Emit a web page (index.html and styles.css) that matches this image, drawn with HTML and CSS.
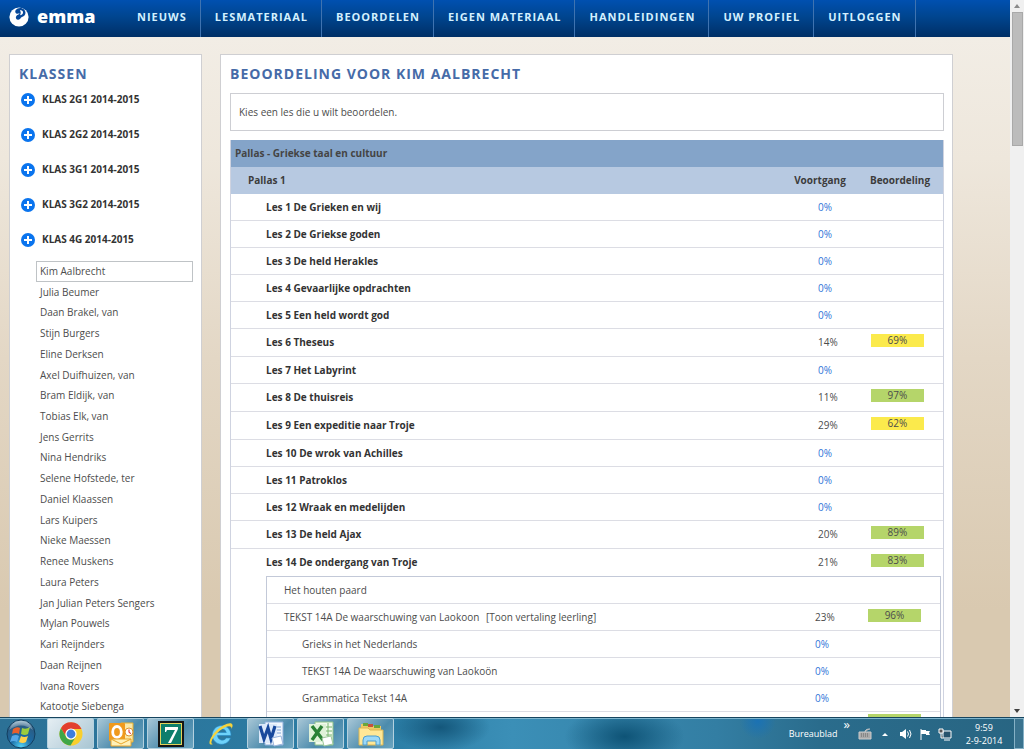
FILE: index.html
```html
<!DOCTYPE html>
<html lang="nl">
<head>
<meta charset="utf-8">
<title>emma - Beoordelen</title>
<link rel="stylesheet" href="styles.css">
</head>
<body>
<div class="window">
<div class="page">
  <header class="topbar">
    <a class="logo" href="#" aria-label="emma">
      <svg class="logo-mark" viewBox="0 0 20 20" aria-hidden="true"><circle cx="10" cy="10" r="9.6" fill="#fff"/><path d="M6.800 3C8.500 .6 13 .2 15.300 2.800C17.800 6 16 9.200 13 10C11.500 10.300 11.500 12.600 9.300 12.800C7.200 12.900 6.300 11 7.200 9.300C8 7.800 10 7.800 10.600 6.300C9.500 6.300 8.500 7.200 7.300 6.500C6 5.600 6 4 6.800 3Z" fill="#06489a"/><path d="M10.800 3.600C12.500 2.800 14.400 4 14 6C13.600 7.600 12 8 11 8.300C11.900 6.800 12.200 5 10.800 3.600Z" fill="#fff"/></svg>
      <span class="logo-name">emma</span>
    </a>
    <nav class="nav">
      <a href="#">NIEUWS</a>
      <a href="#">LESMATERIAAL</a>
      <a href="#">BEOORDELEN</a>
      <a href="#">EIGEN MATERIAAL</a>
      <a href="#">HANDLEIDINGEN</a>
      <a href="#">UW PROFIEL</a>
      <a href="#">UITLOGGEN</a>
    </nav>
  </header>
  <div class="columns">
    <aside class="panel sidebar">
      <h2 class="title">KLASSEN</h2>
      <div class="classes">
        <button class="class-toggle"><svg class="plus" viewBox="0 0 14 14"><circle cx="7" cy="7" r="7"/><path d="M7 3v8M3 7h8"/></svg>KLAS 2G1 2014-2015</button>
        <button class="class-toggle"><svg class="plus" viewBox="0 0 14 14"><circle cx="7" cy="7" r="7"/><path d="M7 3v8M3 7h8"/></svg>KLAS 2G2 2014-2015</button>
        <button class="class-toggle"><svg class="plus" viewBox="0 0 14 14"><circle cx="7" cy="7" r="7"/><path d="M7 3v8M3 7h8"/></svg>KLAS 3G1 2014-2015</button>
        <button class="class-toggle"><svg class="plus" viewBox="0 0 14 14"><circle cx="7" cy="7" r="7"/><path d="M7 3v8M3 7h8"/></svg>KLAS 3G2 2014-2015</button>
        <button class="class-toggle"><svg class="plus" viewBox="0 0 14 14"><circle cx="7" cy="7" r="7"/><path d="M7 3v8M3 7h8"/></svg>KLAS 4G 2014-2015</button>
      </div>
      <div class="students">
        <a class="student selected" href="#">Kim Aalbrecht</a>
        <a class="student" href="#">Julia Beumer</a>
        <a class="student" href="#">Daan Brakel, van</a>
        <a class="student" href="#">Stijn Burgers</a>
        <a class="student" href="#">Eline Derksen</a>
        <a class="student" href="#">Axel Duifhuizen, van</a>
        <a class="student" href="#">Bram Eldijk, van</a>
        <a class="student" href="#">Tobias Elk, van</a>
        <a class="student" href="#">Jens Gerrits</a>
        <a class="student" href="#">Nina Hendriks</a>
        <a class="student" href="#">Selene Hofstede, ter</a>
        <a class="student" href="#">Daniel Klaassen</a>
        <a class="student" href="#">Lars Kuipers</a>
        <a class="student" href="#">Nieke Maessen</a>
        <a class="student" href="#">Renee Muskens</a>
        <a class="student" href="#">Laura Peters</a>
        <a class="student" href="#">Jan Julian Peters Sengers</a>
        <a class="student" href="#">Mylan Pouwels</a>
        <a class="student" href="#">Kari Reijnders</a>
        <a class="student" href="#">Daan Reijnen</a>
        <a class="student" href="#">Ivana Rovers</a>
        <a class="student" href="#">Katootje Siebenga</a>
      </div>
    </aside>
    <main class="panel content">
      <h1 class="title">BEOORDELING VOOR KIM AALBRECHT</h1>
      <p class="notice">Kies een les die u wilt beoordelen.</p>
      <table class="lessons">
        <colgroup><col><col class="col-progress"><col class="col-grade"></colgroup>
        <thead>
          <tr class="method"><th colspan="3">Pallas - Griekse taal en cultuur</th></tr>
          <tr class="book"><th>Pallas 1</th><th class="head">Voortgang</th><th class="head">Beoordeling</th></tr>
        </thead>
        <tbody>
          <tr><th>Les 1 De Grieken en wij</th><td class="zero">0%</td><td></td></tr>
          <tr><th>Les 2 De Griekse goden</th><td class="zero">0%</td><td></td></tr>
          <tr><th>Les 3 De held Herakles</th><td class="zero">0%</td><td></td></tr>
          <tr><th>Les 4 Gevaarlijke opdrachten</th><td class="zero">0%</td><td></td></tr>
          <tr><th>Les 5 Een held wordt god</th><td class="zero">0%</td><td></td></tr>
          <tr class="graded"><th>Les 6 Theseus</th><td>14%</td><td class="grade"><span class="badge fair">69%</span></td></tr>
          <tr><th>Les 7 Het Labyrint</th><td class="zero">0%</td><td></td></tr>
          <tr class="graded"><th>Les 8 De thuisreis</th><td>11%</td><td class="grade"><span class="badge good">97%</span></td></tr>
          <tr class="graded"><th>Les 9 Een expeditie naar Troje</th><td>29%</td><td class="grade"><span class="badge fair">62%</span></td></tr>
          <tr><th>Les 10 De wrok van Achilles</th><td class="zero">0%</td><td></td></tr>
          <tr><th>Les 11 Patroklos</th><td class="zero">0%</td><td></td></tr>
          <tr><th>Les 12 Wraak en medelijden</th><td class="zero">0%</td><td></td></tr>
          <tr class="graded"><th>Les 13 De held Ajax</th><td>20%</td><td class="grade"><span class="badge good">89%</span></td></tr>
          <tr class="open"><th>Les 14 De ondergang van Troje</th><td>21%</td><td class="grade"><span class="badge good">83%</span></td></tr>
          <tr class="details"><td colspan="3">
            <table class="parts">
              <colgroup><col><col class="col-progress"><col class="col-grade"></colgroup>
              <tbody>
                <tr><th>Het houten paard</th><td></td><td></td></tr>
                <tr><th>TEKST 14A De waarschuwing van Laokoon <a class="translation" href="#">[Toon vertaling leerling]</a></th><td>23%</td><td class="grade"><span class="badge good">96%</span></td></tr>
                <tr class="sub"><th>Grieks in het Nederlands</th><td class="zero">0%</td><td></td></tr>
                <tr class="sub"><th>TEKST 14A De waarschuwing van Laokoön</th><td class="zero">0%</td><td></td></tr>
                <tr class="sub"><th>Grammatica Tekst 14A</th><td class="zero">0%</td><td></td></tr>
                <tr class="next"><th></th><td></td><td class="grade"><span class="badge good"></span></td></tr>
              </tbody>
            </table>
          </td></tr>
        </tbody>
      </table>
    </main>
  </div>
</div>
<div class="scrollbar">
  <svg class="arrow" viewBox="0 0 14 12"><path d="M4 8l3-4 3 4z" fill="#8a8a8a"/></svg>
  <div class="thumb"></div>
  <svg class="arrow" viewBox="0 0 14 12"><path d="M4 4h6L7 8z" fill="#404040"/></svg>
</div>
</div>
<footer class="taskbar">
  <button class="start" aria-label="Start"><svg viewBox="0 0 32 30">
    <defs><radialGradient id="orb" cx=".5" cy=".95" r=".95"><stop offset="0" stop-color="#52d2f5"/><stop offset=".4" stop-color="#1b6aa3"/><stop offset=".8" stop-color="#2b5c83"/><stop offset="1" stop-color="#9fc0d2"/></radialGradient></defs>
    <circle cx="16" cy="15" r="14" fill="url(#orb)" stroke="#123f60"/>
    <path d="M8 10q4-3 7-1l-1 6q-3-2-7 0z" fill="#e8602c"/><path d="M17 9q4 2 8-1l-2 7q-3 2-7 0z" fill="#9ccc3c"/><path d="M7 17q4-2 7 0l-2 6q-3-2-7 0z" fill="#55a8e8"/><path d="M16 17q3 2 7 0l-2 6q-3 2-7 0z" fill="#ffd04a"/><path d="M4 11Q16 2 28 11Q24 1 16 2Q8 1 4 11z" fill="#fff" opacity=".3"/></svg></button>
  <div class="tasks">
    <button class="task active" aria-label="Chrome"><svg viewBox="0 0 28 28"><circle cx="14" cy="14" r="11.500" fill="#f9cf2c"/><path d="M4 8.200A11.500 11.500 0 0 1 24.500 9H14a5.500 5.500 0 0 0-5.200 7.200z" fill="#e23e2e"/><path d="M4 8.200A11.500 11.500 0 0 0 13.500 25.500L18.500 17.200A5.500 5.500 0 0 1 8.800 16.200z" fill="#3fa648"/><circle cx="14" cy="14" r="5.600" fill="#fff"/><circle cx="14" cy="14" r="4.400" fill="#3f7edb"/></svg></button>
    <button class="task" aria-label="Outlook"><svg viewBox="0 0 28 28"><path d="M14 3h12v19H14z" fill="#fbe9a8" stroke="#e6b030"/><rect x="2" y="3" width="16" height="18" rx="1" fill="#f09a1c"/><ellipse cx="10" cy="12" rx="4.300" ry="5.500" fill="none" stroke="#fff" stroke-width="2.800"/><circle cx="22" cy="12" r="4" fill="#fff" stroke="#dd922a"/><path d="M22 9.500v3l2 1" stroke="#d22" fill="none"/><path d="M4 19h20v7H4z" fill="#fff1b8" stroke="#e8a52a"/><path d="M4 19l10 5 10-5" fill="none" stroke="#e8a52a"/></svg></button>
    <button class="task" aria-label="7"><svg viewBox="0 0 28 28"><rect x="2" y="2" width="24" height="24" fill="#0d7e6c" stroke="#151515" stroke-width="2"/><rect x="3.500" y="3.500" width="21" height="21" fill="none" stroke="#e3d35a"/><path d="M8 7h13v2l-7 14h-3l7-13h-8l-1 2H8z" fill="#fff"/></svg></button>
    <button class="task plain" aria-label="Internet Explorer"><svg viewBox="0 0 28 28"><path d="M24 15.500H10.500a4.800 4.800 0 0 0 8.800 2.500H23.500A9.400 9.400 0 1 1 24 15.500zM10.500 12.500h8.800a4.500 4.500 0 0 0-8.800 0z" fill="#6ed2fa" stroke="#2387c5" stroke-width=".6"/><path d="M6 24C0 27 2 18 9 11C16 4 25 1 25.500 5C25.800 6 25 8 24.500 9C25 5 20 5 13 10.500C6 16 2 24 6 24z" fill="#f6d33c"/></svg></button>
    <button class="task" aria-label="Word"><svg viewBox="0 0 28 28"><path d="M8 2h18v23H8z" fill="#f0f6fd" stroke="#8eb0dc"/><path d="M19 7h5m-5 3h5m-5 3h5" stroke="#7fa2d6"/><path d="M2 4h18v19H2z" fill="#dce9fa"/><path d="M3 6l4 13 4-11 3 11L18 6" fill="none" stroke="#17489c" stroke-width="3.200"/><path d="M15 18l9-2 2 8-9 2z" fill="#fff" stroke="#9bb5dc"/></svg></button>
    <button class="task" aria-label="Excel"><svg viewBox="0 0 28 28"><path d="M8 2h18v23H8z" fill="#f1faed" stroke="#8dc28a"/><path d="M17 7h8m-8 4h8m-8 4h8M21 3v14" stroke="#79b66e"/><path d="M2 4h17v18H2z" fill="#dff2d8"/><path d="M5 6l11 14M15 6L5 20" stroke="#2a8136" stroke-width="3.400"/><path d="M15 18l9-2 2 8-9 2z" fill="#fff" stroke="#9cc89b"/></svg></button>
    <button class="task" aria-label="Verkenner"><svg viewBox="0 0 28 28"><path d="M4 4h8l2 2h10v18H4z" fill="#eec963"/><path d="M6 3h5v3H6zM17 5h6v3h-6z" fill="#68a63c"/><path d="M11 4h5v3h-5z" fill="#c7513c"/><path d="M2 8h9l2 2h13v15H2z" fill="#ffe796" stroke="#dcb652"/><path d="M6 25v-5q0-4 4-4h9q4 0 4 4v5h-4v-4h-9v4z" fill="#9bd8f8" stroke="#4d9dcf"/></svg></button>
  </div>
  <div class="tray">
    <span class="desk">Bureaublad</span><span class="more">»</span>
    <svg class="tray-icon" viewBox="0 0 14 14"><path d="M1 5h12v7H1zM7 5q0-3 5-3" fill="#a9a9a9" stroke="#ccc"/><path d="M3 7h8M3 9h8" stroke="#666" stroke-dasharray="1 1"/></svg>
    <svg class="tray-icon" viewBox="0 0 14 14"><path d="M4 9l3-3 3 3z" fill="#fff"/></svg>
    <svg class="tray-icon" viewBox="0 0 14 14"><path d="M2 5h2l4-3v10L4 9H2z" fill="#fff"/><path d="M9.500 4.500q2 2.500 0 5M11.500 3q3 4 0 8" fill="none" stroke="#fff"/></svg>
    <svg class="tray-icon" viewBox="0 0 14 14"><path d="M3 2v11" stroke="#fff"/><path d="M3 3h5v1h4l-1 2 1 2H8V7H3z" fill="#fff"/></svg>
    <svg class="tray-icon" viewBox="0 0 14 14"><path d="M5 4h8v7H5z" fill="#27536c" stroke="#fff"/><path d="M6 13h6" stroke="#fff"/><path d="M1 2h4v4H1zM3 6v5h2" fill="#555" stroke="#fff"/></svg>
    <time class="clock"><span>9:59</span><span>2-9-2014</span></time>
    <button class="show-desktop" aria-label="Bureaublad weergeven"></button>
  </div>
</footer>
</body>
</html>
```
FILE: styles.css
```css
* { box-sizing: border-box; }
body {
  margin: 0;
  height: 100vh;
  display: flex;
  flex-direction: column;
  overflow: hidden;
  font: 10px/15px "Open Sans", "Noto Sans", sans-serif;
  color: #4c4c4c;
}
a { color: inherit; text-decoration: none; }
button { font: inherit; color: inherit; border: 0; padding: 0; background: none; }

.window { flex: 1; min-height: 0; display: flex; }
.page {
  flex: 1;
  min-width: 0;
  display: flex;
  flex-direction: column;
  overflow: hidden;
  background: linear-gradient(#f3efe8, #eee7dc 22%, #e3d7c5 50%, #d9c9b0 85%);
}

.topbar {
  flex: none;
  height: 37px;
  display: flex;
  background: linear-gradient(#0050b0, #00458f 45%, #002f66);
}
.logo { width: 123px; height: 34px; padding-left: 9px; display: flex; align-items: center; gap: 8px; }
.logo-mark { width: 20px; height: 20px; }
.logo-name { font: 800 18px/20px "Open Sans", sans-serif; color: #fff; padding-bottom: 2px; }
.nav { display: flex; }
.nav a {
  padding: 9px 13px 9px 14px;
  border-right: 1px solid #3f73b0;
  font-size: 11px;
  font-weight: 700;
  letter-spacing: 1px;
  white-space: nowrap;
  color: #d3f0ff;
}

.columns { flex: 1; min-height: 0; display: flex; gap: 18px; padding: 17px 57px 0 9px; }
.panel { background: #fff; border: 1px solid #cfcfd2; border-bottom: 0; padding: 9px 8px 0 9px; }
.sidebar { flex: none; width: 193px; display: flex; flex-direction: column; }
.content { flex: 1; min-width: 0; }
.title { margin: 0; font-size: 14px; line-height: 19px; letter-spacing: 1px; color: #466ba8; }

.classes { display: flex; flex-direction: column; gap: 20px; padding: 9px 0 14px 2px; }
.class-toggle { display: flex; align-items: center; gap: 7px; font-weight: 700; color: #333; }
.plus { width: 14px; height: 14px; fill: #0a74ee; stroke: #fff; stroke-width: 2; }
.plus circle { stroke: none; }
.students { flex: 1; display: flex; flex-direction: column; padding-left: 17px; }
.student { flex: 1 1 auto; display: flex; align-items: center; padding-left: 3px; border: 1px solid transparent; }
.selected { border-color: #bfc3c6; }

.notice { margin: 10px 0 9px; padding: 11px 8px 10px; border: 1px solid #cdced3; }
table { width: 100%; border-collapse: separate; border-spacing: 0; table-layout: fixed; }
.col-progress { width: 74px; }
.col-grade { width: 86px; }
th { text-align: left; }
th, td { height: 27px; padding: 0; border-bottom: 1px solid #dcdde4; }
.lessons { border-left: 1px solid #cfd3e0; border-right: 1px solid #cfd3e0; }
.lessons th { padding-left: 35px; color: #333; }
.lessons td { padding-left: 35px; }
.lessons .method th { background: #84a4c9; padding-left: 4px; border: 0; color: #444; }
.lessons .book th { background: #b7c9e1; padding-left: 17px; border: 0; color: #3c3c3c; }
.lessons .book .head { padding: 0; text-align: center; }
.graded th, .graded td { height: 28px; }
.open th, .open td { border: 0; }
.lessons td.zero { color: #2f74d8; }
.lessons td.grade { padding: 5px 0 0 14px; vertical-align: top; }
.lessons .next td.grade { padding-top: 2px; }
.badge { display: block; width: 53px; height: 13px; line-height: 13px; text-align: center; }
.fair { background: #fbea4c; }
.good { background: #b5d56a; }
.lessons .details > td { padding: 0 2px 0 35px; }
.parts { border: 1px solid #c3c9d8; }
.parts th { padding-left: 17px; font-weight: 400; color: #4c4c4c; }
.parts .sub th { padding-left: 35px; }
.translation { margin-left: 4px; }

.scrollbar { flex: none; width: 14px; background: #f0f0f0; display: flex; flex-direction: column; }
.arrow { height: 12px; }
.thumb { height: 134px; margin: 0 1px auto 2px; background: #bcbcbc; border: 1px solid #a9a9a9; }

.taskbar {
  flex: none;
  height: 32px;
  display: flex;
  border-top: 1px solid #17455f;
  box-shadow: inset 0 1px #7fb6cf;
  background:
    radial-gradient(ellipse 50px 24px at 43% 30%, #14577b, transparent),
    radial-gradient(ellipse 60px 30px at 61% 60%, #0e5376, transparent),
    radial-gradient(ellipse 18px 18px at 74% 10%, #1b72b4, transparent),
    linear-gradient(90deg, #2c7196, #2b7ea6 38%, #3b8fb7 50%, #337ea3 70%, #2a6c8c 80%, #286582);
  color: #fff;
}
.start { width: 47px; padding: 1px 0 0 5px; text-align: left; }
.start svg { width: 32px; height: 30px; display: block; }
.tasks { display: flex; gap: 3px; }
.task {
  width: 47px;
  display: grid;
  place-items: center;
  border: 1px solid #b4d1df;
  border-radius: 2px;
  background: linear-gradient(135deg, #a7c6d6, #4c8bac 60%, #6ba5c0);
}
.task svg { width: 28px; height: 28px; }
.active { background: linear-gradient(135deg, #e5eef3, #a9c6d3); }
.plain { background: none; border-color: transparent; }
.tray { margin-left: auto; display: flex; align-items: center; gap: 6px; font-size: 9px; line-height: 13px; }
.more { align-self: flex-start; font-size: 13px; margin-right: 2px; }
.tray-icon { width: 14px; height: 14px; }
.clock { width: 48px; margin-left: 2px; display: flex; flex-direction: column; text-align: center; white-space: nowrap; }
.show-desktop { width: 10px; height: 31px; border: 1px solid #85b1c6; background: #3a738f; }
```
